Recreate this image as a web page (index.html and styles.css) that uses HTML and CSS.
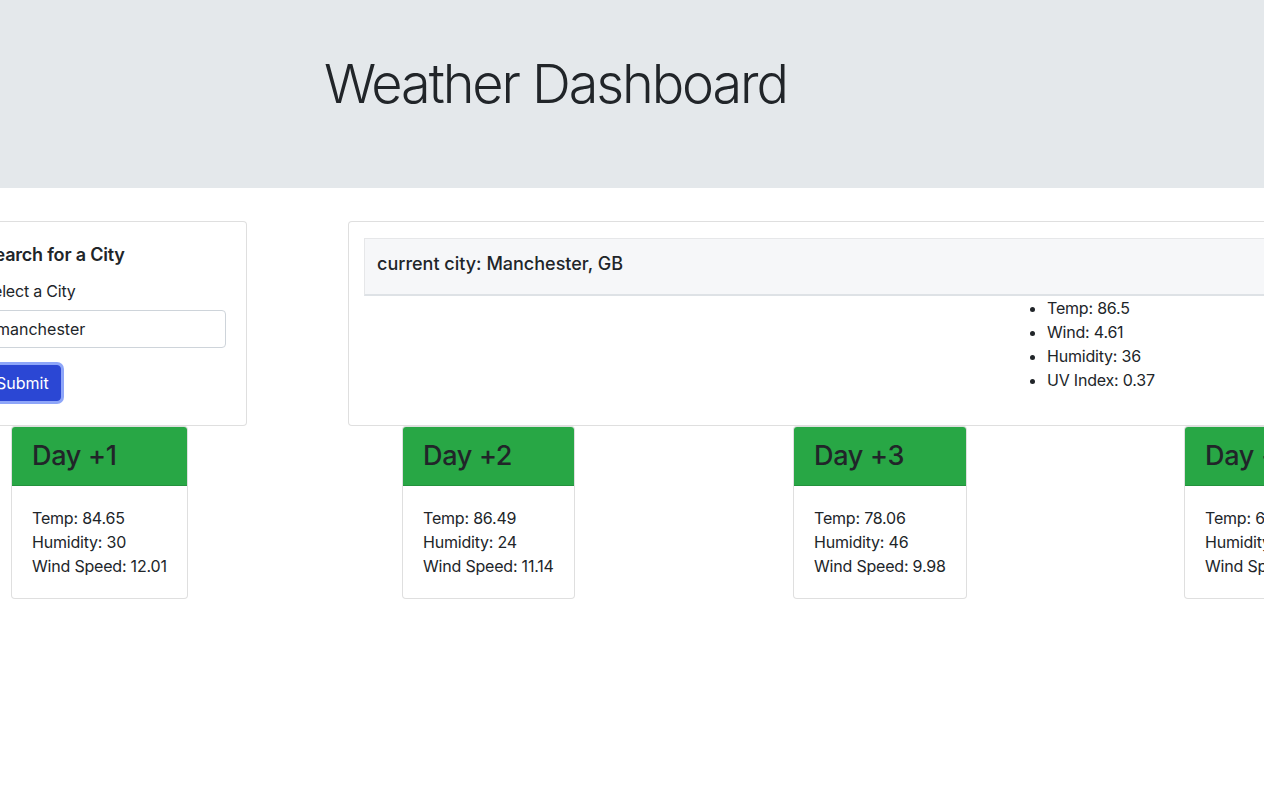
FILE: index.html
```html
<!DOCTYPE html>
<html lang="en">
<head>
<meta charset="utf-8">
<title>Weather Dashboard</title>
<link rel="stylesheet" href="styles.css">
</head>
<body>
<header class="jumbotron">
  <h1 class="display">Weather Dashboard</h1>
</header>
<main class="main-row">
  <section class="card search-card">
    <div class="card-body">
      <h5 class="card-title">Search for a City</h5>
      <form class="search-form">
        <label class="form-label" for="city">Select a City</label>
        <input class="form-control" id="city" type="text" value="manchester">
        <button class="btn-submit" type="button">Submit</button>
      </form>
    </div>
  </section>
  <section class="card current-card">
    <div class="current-header">current city: Manchester, GB</div>
    <ul class="current-list">
      <li>Temp: 86.5</li>
      <li>Wind: 4.61</li>
      <li>Humidity: 36</li>
      <li>UV Index: 0.37</li>
    </ul>
  </section>
</main>
<section class="forecast-row">
  <div class="forecast-col">
    <div class="card day-card">
      <div class="day-header"><h3>Day +1</h3></div>
      <div class="day-body">
        <div>Temp: 84.65</div>
        <div>Humidity: 30</div>
        <div>Wind Speed: 12.01</div>
      </div>
    </div>
  </div>
  <div class="forecast-col">
    <div class="card day-card">
      <div class="day-header"><h3>Day +2</h3></div>
      <div class="day-body">
        <div>Temp: 86.49</div>
        <div>Humidity: 24</div>
        <div>Wind Speed: 11.14</div>
      </div>
    </div>
  </div>
  <div class="forecast-col">
    <div class="card day-card">
      <div class="day-header"><h3>Day +3</h3></div>
      <div class="day-body">
        <div>Temp: 78.06</div>
        <div>Humidity: 46</div>
        <div>Wind Speed: 9.98</div>
      </div>
    </div>
  </div>
  <div class="forecast-col">
    <div class="card day-card">
      <div class="day-header"><h3>Day +4</h3></div>
      <div class="day-body">
        <div>Temp: 65.12</div>
        <div>Humidity: 58</div>
        <div>Wind Speed: 10.29</div>
      </div>
    </div>
  </div>
</section>
</body>
</html>
```
FILE: styles.css
```css
html, body {
  margin: 0;
  padding: 0;
  overflow: hidden;
}
body {
  font-family: Inter, "Noto Sans", "Liberation Sans", sans-serif;
  font-size: 16px;
  line-height: 24px;
  letter-spacing: -0.2px;
  color: #212529;
  background: #fff;
  width: 1264px;
}
* { box-sizing: border-box; }

.jumbotron {
  background: #e4e8eb;
  height: 188px;
  padding: 51px 0 0 324px;
}
.display {
  margin: 0;
  font-size: 54px;
  font-weight: 300;
  line-height: 65px;
  letter-spacing: -2.1px;
}

.card {
  background: #fff;
  border: 1px solid rgba(0, 0, 0, 0.125);
  border-radius: 4px;
}

.main-row {
  display: flex;
  align-items: flex-start;
  margin: 33px 0 0 -38px;
}
.search-card {
  flex: none;
  width: 285px;
  height: 205px;
  margin-right: 101px;
}
.card-body {
  padding: 20px;
}
.card-title {
  margin: 0 0 12px;
  padding-top: 1px;
  font-size: 18px;
  font-weight: 600;
  line-height: 24px;
}
.search-form {
  display: flex;
  flex-direction: column;
  align-items: flex-start;
}
.form-label {
  margin-bottom: 7px;
}
.form-control {
  width: 100%;
  height: 38px;
  padding: 6px 12px;
  font: inherit;
  color: #212529;
  border: 1px solid #ced4da;
  border-radius: 4px;
  margin-bottom: 17px;
}
.btn-submit {
  height: 36px;
  padding: 0 11px;
  margin-left: 1px;
  font: inherit;
  color: #fff;
  background: #2b47d4;
  border: 1px solid #2b47d4;
  border-radius: 4px;
  box-shadow: 0 0 0 3px #8ea6f9;
}

.current-card {
  flex: none;
  width: 1334px;
  height: 205px;
  padding: 16px 16px 16px 15px;
}
.current-header {
  height: 58px;
  padding: 0 12px 5px;
  display: flex;
  align-items: center;
  font-size: 18px;
  font-weight: 500;
  letter-spacing: 0;
  background: #f6f7f9;
  border: 1px solid rgba(0, 0, 0, 0.06);
  border-bottom: 2px solid #dee2e6;
}
.current-list {
  margin: 0 0 16px 651px;
  padding-left: 32px;
}

.forecast-row {
  display: flex;
  padding-left: 11px;
}
.forecast-col {
  flex: none;
  width: 391px;
}
.day-card {
  width: fit-content;
  overflow: hidden;
}
.day-header {
  background: #28a745;
  padding: 12px 20px;
  border-bottom: 1px solid rgba(0, 0, 0, 0.125);
}
.day-header h3 {
  margin: 0;
  font-size: 27px;
  font-weight: 500;
  line-height: 34px;
  letter-spacing: -0.3px;
}
.day-body {
  padding: 20px;
}
```
